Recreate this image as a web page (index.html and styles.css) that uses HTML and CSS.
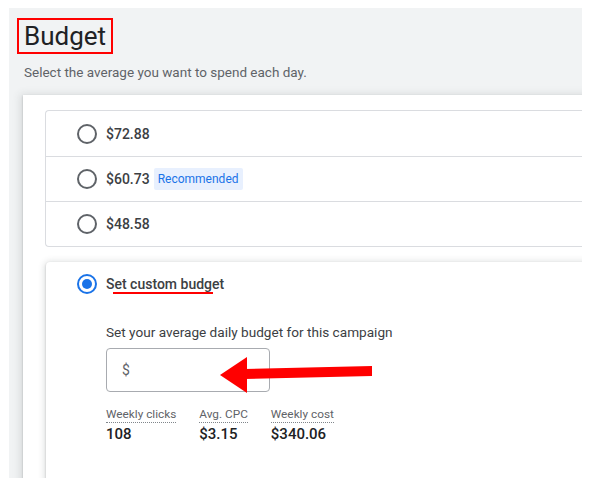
FILE: index.html
```html
<!DOCTYPE html>
<html>
<head>
<meta charset="utf-8">
<link rel="stylesheet" href="styles.css">
</head>
<body>
<div class="panel">
  <div class="head">
    <h1 class="title">Budget</h1>
    <p class="sub">Select the average you want to spend each day.</p>
  </div>
  <div class="card">
    <div class="options">
      <div class="row"><span class="radio"></span><span class="amount">$72.88</span></div>
      <div class="row"><span class="radio"></span><span class="amount">$60.73</span><span class="chip">Recommended</span></div>
      <div class="row"><span class="radio"></span><span class="amount">$48.58</span></div>
    </div>
    <div class="custom">
      <div class="crow"><span class="radio on"></span><span class="amount">Set custom budget</span></div>
      <span class="mark"></span>
      <div class="body">
        <div class="label">Set your average daily budget for this campaign</div>
        <div class="input"><span class="cur">$</span></div>
        <div class="stats">
          <div class="stat"><span class="sl">Weekly clicks</span><span class="sv">108</span></div>
          <div class="stat"><span class="sl">Avg. CPC</span><span class="sv">$3.15</span></div>
          <div class="stat"><span class="sl">Weekly cost</span><span class="sv">$340.06</span></div>
        </div>
      </div>
      <svg class="arrow" width="160" height="46" viewBox="0 0 160 46">
        <polygon points="30,17 158,14 158,24 30,27" fill="#ff0000"/>
        <polygon points="6,23 33,5 33,41" fill="#ff0000"/>
      </svg>
    </div>
  </div>
</div>
</body>
</html>
```
FILE: styles.css
```css
* { box-sizing: border-box; }
body {
  margin: 0;
  background: #ffffff;
  font-family: Roboto, "Liberation Sans", sans-serif;
  color: #3c4043;
}
.panel {
  margin: 8px 12px 0 9px;
  height: 470px;
  background: #f1f3f4;
  overflow: hidden;
}
.head {
  padding: 10px 0 0 8px;
  height: 87px;
}
.title {
  display: inline-block;
  margin: 0;
  height: 36px;
  width: 96px;
  border: 2px solid #ff0000;
  padding: 0 0 0 5px;
  font-size: 26px;
  font-weight: 400;
  line-height: 32px;
  color: #202124;
}
.sub {
  margin: 10px 0 0 7px;
  font-size: 13.5px;
  line-height: 16px;
  color: #5f6368;
}
.card {
  margin-left: 14px;
  width: 600px;
  height: 400px;
  background: #ffffff;
  box-shadow: 0 1px 2px rgba(60,64,67,.3), 0 2px 8px 3px rgba(60,64,67,.12);
  padding: 15px 0 0 22px;
}
.options {
  border: 1px solid #dadce0;
  border-right: none;
  border-radius: 4px 0 0 4px;
}
.row {
  height: 45px;
  display: flex;
  align-items: center;
  padding-left: 31px;
  border-top: 1px solid #dadce0;
}
.row:first-child { border-top: none; }
.radio {
  width: 20px;
  height: 20px;
  border: 2px solid #5f6368;
  border-radius: 50%;
  margin-right: 9px;
  flex: none;
}
.radio.on {
  border-color: #1a73e8;
  display: flex;
  align-items: center;
  justify-content: center;
}
.radio.on::after {
  content: "";
  width: 10px;
  height: 10px;
  border-radius: 50%;
  background: #1a73e8;
}
.amount {
  font-size: 14px;
  font-weight: 500;
  color: #3c4043;
}
.chip {
  margin-left: 4px;
  height: 22px;
  padding: 0 4px;
  background: #e8f0fe;
  color: #1a73e8;
  font-size: 12px;
  line-height: 22px;
  border-radius: 2px;
}
.custom {
  position: relative;
  margin-top: 15px;
  margin-left: 1px;
  height: 240px;
  background: #ffffff;
  box-shadow: 0 1px 2px rgba(60,64,67,.3), 0 1px 6px 2px rgba(60,64,67,.15);
  border-radius: 4px 0 0 0;
  padding: 12px 0 0 31px;
}
.crow {
  display: flex;
  align-items: center;
  height: 20px;
}
.mark {
  position: absolute;
  left: 67px;
  top: 30px;
  width: 100px;
  height: 2px;
  background: #ff0000;
}
.body {
  padding: 28px 0 0 29px;
}
.label {
  font-size: 13.6px;
  line-height: 20px;
  color: #3c4043;
}
.input {
  margin-top: 6px;
  width: 164px;
  height: 44px;
  border: 1px solid #a8abb0;
  border-radius: 4px;
  display: flex;
  align-items: center;
  padding-left: 15px;
}
.cur {
  font-size: 14px;
  color: #5f6368;
}
.stats {
  display: flex;
  gap: 23px;
  margin-top: 15px;
}
.stat {
  display: flex;
  flex-direction: column;
  align-items: flex-start;
}
.sl {
  font-size: 11.8px;
  line-height: 15px;
  color: #5f6368;
  border-bottom: 1px dotted #80868b;
}
.sv {
  margin-top: 2px;
  font-size: 15px;
  line-height: 18px;
  font-weight: 500;
  color: #202124;
}
.arrow {
  position: absolute;
  left: 168px;
  top: 90px;
}
```
